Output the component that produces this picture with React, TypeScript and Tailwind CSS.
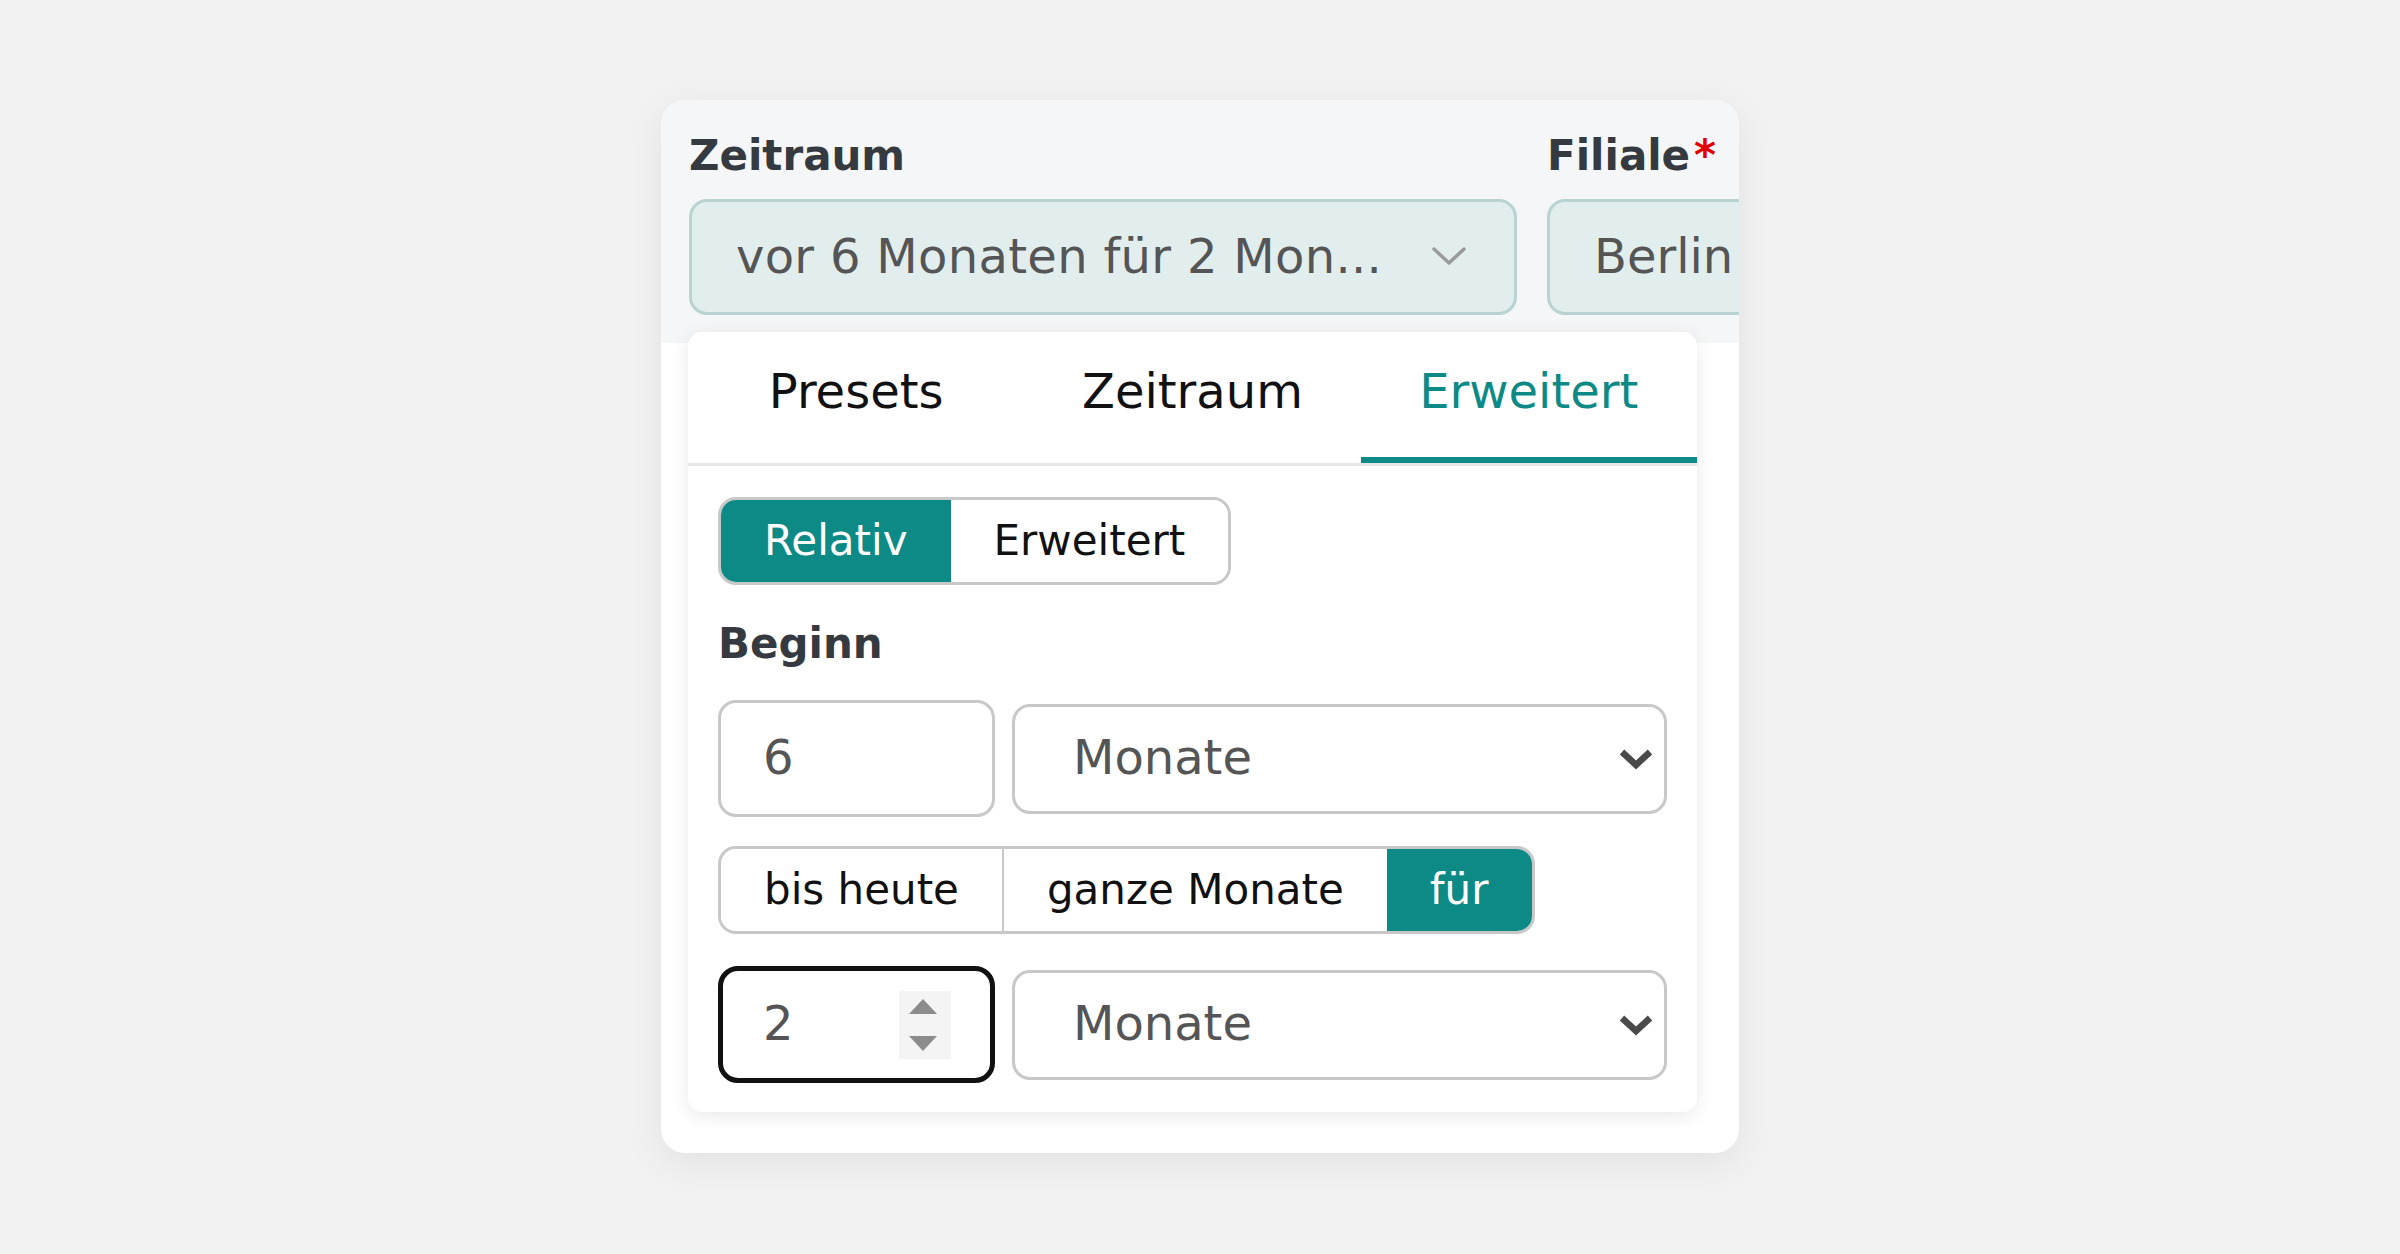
import { useState } from "react";

function Chevron() {
  return (
    <svg width="36" height="22" viewBox="0 0 36 22" className="shrink-0">
      <polyline points="4,4 18,17 32,4" fill="none" stroke="#4a4a4a" strokeWidth="6.5" strokeLinecap="butt" strokeLinejoin="miter" />
    </svg>
  );
}

function ThinChevron() {
  return (
    <svg width="36" height="20" viewBox="0 0 36 20" className="shrink-0">
      <polyline points="3,3 18,17 33,3" fill="none" stroke="#9a9a9a" strokeWidth="3.5" strokeLinecap="round" strokeLinejoin="round" />
    </svg>
  );
}

function Spinner() {
  return (
    <svg width="52" height="68" viewBox="0 0 52 68" className="shrink-0">
      <rect x="0" y="0" width="52" height="68" fill="#f4f4f4" />
      <polygon points="10,23 38,23 24,8" fill="#8c8c8c" />
      <polygon points="10,45 38,45 24,60" fill="#8c8c8c" />
    </svg>
  );
}

function Segmented({ items, active }: { items: string[]; active: number }) {
  return (
    <div className="inline-flex h-[88px] overflow-hidden rounded-[18px] border-[3px] border-[#c8c8c8]">
      {items.map((label, i) => (
        <button
          key={label}
          className={`h-full px-[43px] text-[42px] leading-none ${
            i > 0 && i !== active && i - 1 !== active ? "border-l-[2px] border-[#c8c8c8]" : ""
          } ${i === active ? "bg-[#0d8a86] text-white" : "bg-white text-[#111]"}`}
        >
          {label}
        </button>
      ))}
    </div>
  );
}

export default function App() {
  const [tab, setTab] = useState(2);
  const tabs = ["Presets", "Zeitraum", "Erweitert"];

  return (
    <div
      className="flex min-h-screen w-full justify-center bg-[#f2f2f2] pt-[100px]"
      style={{ fontFamily: '"DejaVu Sans", sans-serif' }}
    >
      <div className="flex h-[1053px] w-[1078px] flex-col overflow-hidden rounded-[24px] bg-white shadow-[0_10px_40px_rgba(0,0,0,0.07)]">
        {/* filter bar */}
        <div className="flex h-[243px] shrink-0 gap-[30px] bg-[#f5f6f8] pl-[28px] pt-[24px]">
          <div className="flex w-[828px] shrink-0 flex-col">
            <span className="text-[42px] font-bold leading-[63px] text-[#343a40]">Zeitraum</span>
            <div className="mt-[12px] flex h-[116px] items-center justify-between rounded-[18px] border-[3px] border-[#b9d3d2] bg-[#e2eeee] pb-[3px] pl-[44px] pr-[47px]">
              <span className="truncate text-[48px] tracking-[0.3px] text-[#555]">vor 6 Monaten für 2 Mon...</span>
              <ThinChevron />
            </div>
          </div>
          <div className="flex w-[600px] shrink-0 flex-col">
            <span className="text-[42px] font-bold leading-[63px] text-[#343a40]">
              Filiale<span className="ml-[4px] text-[#e00000]">*</span>
            </span>
            <div className="mt-[12px] flex h-[116px] items-center rounded-[18px] border-[3px] border-[#b9d3d2] bg-[#e2eeee] pb-[3px] pl-[44px]">
              <span className="text-[48px] text-[#555]">Berlin</span>
            </div>
          </div>
        </div>

        {/* dropdown panel */}
        <div className="relative z-10 -mt-[11px] ml-[27px] w-[1009px] rounded-[14px] bg-white shadow-[0_4px_18px_rgba(0,0,0,0.09)]">
          <div className="flex border-b-[3px] border-[#e6e7ea]">
            {tabs.map((t, i) => (
              <button
                key={t}
                onClick={() => setTab(i)}
                className={`flex h-[131px] flex-1 items-center justify-center border-b-[6px] pb-[8px] text-[48px] leading-none ${
                  i === tab ? "border-[#0d8a86] text-[#0d8a86]" : "border-transparent text-[#111]"
                }`}
              >
                {t}
              </button>
            ))}
          </div>

          <div className="flex flex-col px-[30px] pb-[29px] pt-[31px]">
            <div>
              <Segmented items={["Relativ", "Erweitert"]} active={0} />
            </div>

            <span className="mt-[27px] text-[42px] font-bold leading-[63px] text-[#343a40]">Beginn</span>

            <div className="mt-[25px] flex items-center gap-[17px]">
              <div className="flex h-[117px] w-[277px] shrink-0 items-center rounded-[18px] border-[3px] border-[#c8c8c8] pb-[3px] pl-[42px]">
                <span className="text-[48px] text-[#555]">6</span>
              </div>
              <div className="flex h-[110px] flex-1 items-center justify-between rounded-[18px] border-[3px] border-[#c8c8c8] pl-[58px] pr-[10px]">
                <span className="pb-[3px] text-[48px] text-[#555]">Monate</span>
                <Chevron />
              </div>
            </div>

            <div className="mt-[29px]">
              <Segmented items={["bis heute", "ganze Monate", "für"]} active={2} />
            </div>

            <div className="mt-[32px] flex items-center gap-[17px]">
              <div className="flex h-[117px] w-[277px] shrink-0 items-center justify-between rounded-[20px] border-[5px] border-[#111] pl-[40px] pr-[39px]">
                <span className="pb-[3px] text-[48px] text-[#555]">2</span>
                <Spinner />
              </div>
              <div className="flex h-[110px] flex-1 items-center justify-between rounded-[18px] border-[3px] border-[#c8c8c8] pl-[58px] pr-[10px]">
                <span className="pb-[3px] text-[48px] text-[#555]">Monate</span>
                <Chevron />
              </div>
            </div>
          </div>
        </div>
      </div>
    </div>
  );
}
